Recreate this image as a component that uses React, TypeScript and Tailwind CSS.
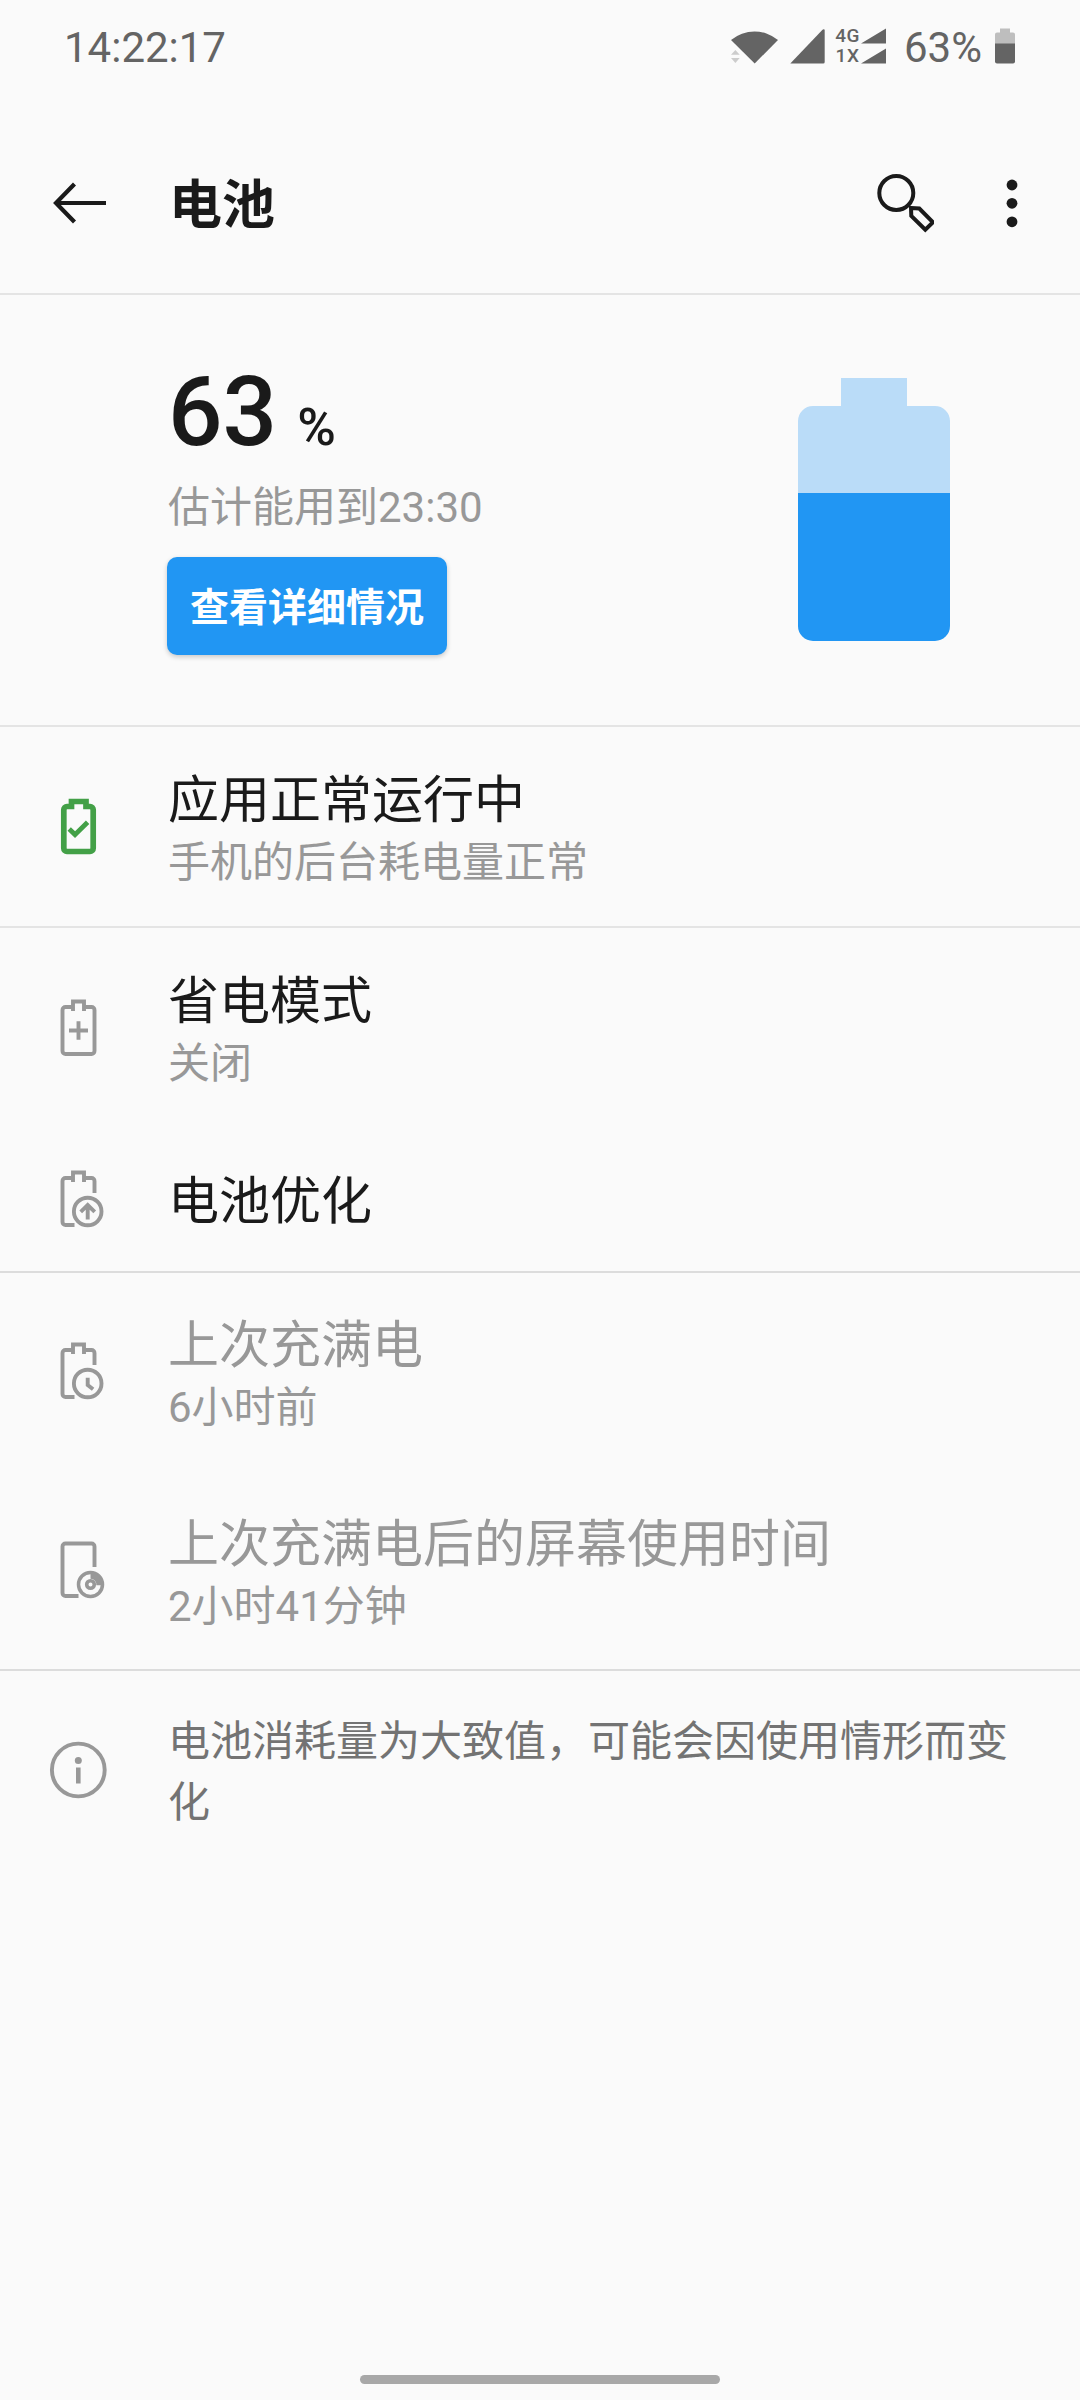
import type { ReactNode } from 'react';

const BATTERY_TOP = 'M27 15V5.5h11V15M16.5 14a3 3 0 0 1 3-3H27M38 11h7.5a3 3 0 0 1 3 3';

function RowIcon({ children, className = 'text-[#989898]' }: { children: ReactNode; className?: string }) {
  return (
    <svg viewBox="0 0 64 64" className={`size-16 shrink-0 ${className}`} fill="none" stroke="currentColor" strokeWidth="3.9">
      {children}
    </svg>
  );
}

function BatteryOkIcon() {
  return (
    <RowIcon className="text-[#43a047]">
      <path d="M25.5 6.5H40V11.5h4a3.2 3.2 0 0 1 3.2 3.2v38.6a3.2 3.2 0 0 1-3.2 3.2H21a3.2 3.2 0 0 1-3.2-3.2V14.7a3.2 3.2 0 0 1 3.2-3.2h4.5z" strokeWidth="5.7" />
      <path d="M23.2 34l5.8 5.6L41.6 27.2" strokeWidth="4.8" />
    </RowIcon>
  );
}

function BatterySaverIcon() {
  return (
    <RowIcon>
      <path d={BATTERY_TOP} />
      <path d="M16.5 14v41a3 3 0 0 0 3 3h26a3 3 0 0 0 3-3V14M23 34.5h19M32.5 25.3v18.5" />
    </RowIcon>
  );
}

function BatteryOptimizeIcon() {
  return (
    <RowIcon>
      <path d={BATTERY_TOP} />
      <path d="M16.5 14v41a3 3 0 0 0 3 3h9M48.5 14v12" />
      <circle cx="41.7" cy="44.5" r="13.8" />
      <path d="M41.7 52.5V38M34.7 44.8l7-6.8 7 6.8" />
    </RowIcon>
  );
}

function BatteryClockIcon() {
  return (
    <RowIcon>
      <path d={BATTERY_TOP} />
      <path d="M16.5 14v41a3 3 0 0 0 3 3h9M48.5 14v12" />
      <circle cx="41.7" cy="44.5" r="13.8" />
      <path d="M41.7 38.8v7.2l5.4 4.2" />
    </RowIcon>
  );
}

function ScreenTimeIcon() {
  return (
    <RowIcon>
      <path d="M48.5 29V8.5a3 3 0 0 0-3-3h-26a3 3 0 0 0-3 3V55a3 3 0 0 0 3 3h13" />
      <circle cx="44.5" cy="46.5" r="12" strokeWidth="3.5" />
      <circle cx="44.5" cy="46.5" r="3.8" strokeWidth="3.6" />
      <path d="M44.5 34.5a12 12 0 0 1 12 12.8h-6.2a5.8 5.8 0 0 0-5.8-6.6z" fill="currentColor" stroke="none" />
    </RowIcon>
  );
}

function InfoIcon() {
  return (
    <RowIcon>
      <circle cx="32.3" cy="32" r="26.4" />
      <circle cx="32.3" cy="22.5" r="3.5" fill="currentColor" stroke="none" />
      <path d="M32.3 29.5v16" strokeWidth="4.6" />
    </RowIcon>
  );
}

function StatusBar() {
  return (
    <div className="flex h-[91px] items-center pl-16 pr-[65px] text-[42px] text-[#646464]">
      <span className="flex-1 pt-1">14:22:17</span>
      <svg viewBox="0 0 94 36" className="h-9 w-[94px]" fill="currentColor">
        <path d="M0 12a37 37 0 0 1 47 0L23.7 35.5z" />
        <path d="M0 26.7l4.4-4.7 4.3 4.7zM0 30l4.4 5 4.3-5z" fill="#ccc" />
        <path d="M59.3 35.5L91.5 1.8c1-1 2.2-.6 2.2.8v31.4a1.5 1.5 0 0 1-1.5 1.5z" />
      </svg>
      <div className="ml-[9px] flex w-[27px] flex-col items-center text-[19px] font-medium leading-5 tracking-[0.5px]">
        <span>4G</span>
        <span>1X</span>
      </div>
      <svg viewBox="0 0 25 36" className="h-9 w-[25px]" fill="currentColor">
        <path d="M0 15.5L25 .5v15zM0 35.5l25-15v15z" />
      </svg>
      <span className="ml-[18px] pt-1">63%</span>
      <svg viewBox="0 0 20 36" className="ml-[13px] h-9 w-5" fill="currentColor">
        <path d="M5 .5h10v4h3a2 2 0 0 1 2 2V16H0V6.5a2 2 0 0 1 2-2h3z" fill="#bebebe" />
        <path d="M0 15.5h20v18a2 2 0 0 1-2 2H2a2 2 0 0 1-2-2z" />
      </svg>
    </div>
  );
}

function AppBar() {
  return (
    <header className="flex h-[204px] items-center border-b-2 border-[#e4e4e4] pl-[52px] pr-[60px] pt-[22px]">
      <svg viewBox="0 0 56 44" className="h-11 w-14" fill="none" stroke="currentColor" strokeWidth="4.2">
        <path d="M22.5 3L4 22l18.5 19M4 22h50" />
      </svg>
      <h1 className="ml-[61px] flex-1 pt-[7px] text-[53px] font-bold">电池</h1>
      <svg viewBox="0 0 60 60" className="size-[60px]" fill="none" stroke="currentColor" strokeWidth="4">
        <circle cx="22.3" cy="20" r="17" />
        <path d="M37 35l8.3.5L59 49.3l-7.7 7.4L37.3 43z" />
      </svg>
      <svg viewBox="0 0 16 60" className="ml-[70px] h-[60px] w-4" fill="currentColor">
        <circle cx="8" cy="12" r="5.4" />
        <circle cx="8" cy="30.3" r="5.4" />
        <circle cx="8" cy="48.8" r="5.4" />
      </svg>
    </header>
  );
}

function Summary() {
  return (
    <section className="flex h-[432px] justify-between border-b-2 border-[#e4e4e4] pl-[167px] pr-[130px]">
      <div className="flex flex-col items-start pt-[61px]">
        <div className="ml-px flex items-baseline gap-5 text-[96px] font-medium leading-[112px]">
          63<span className="text-[52.5px]">%</span>
        </div>
        <p className="-mt-[5px] ml-px text-[42px] leading-[60px] text-[#989898]">估计能用到23:30</p>
        <button className="mt-[19px] h-[98px] w-[280px] rounded-[10px] bg-[#2196f3] pt-1 text-[39px] font-bold text-white shadow-[0_2px_5px_rgba(0,0,0,0.2)]">
          查看详细情况
        </button>
      </div>
      <svg viewBox="0 0 152 263" className="mt-[83px] h-[263px] w-[152px]">
        <path d="M43 0h66v28h28a15 15 0 0 1 15 15v72H0V43a15 15 0 0 1 15-15h28z" fill="#badcf8" />
        <path d="M0 115h152v133a15 15 0 0 1-15 15H15a15 15 0 0 1-15-15z" fill="#2196f3" />
      </svg>
    </section>
  );
}

type RowProps = { icon: ReactNode; title: string; sub?: string; className: string };

function Row({ icon, title, sub, className }: RowProps) {
  return (
    <div className={`flex items-center pl-[46px] ${className}`}>
      {icon}
      <div className="ml-[58px]">
        <div className={`text-[51px] leading-[70px] ${sub ? 'pt-[2px]' : 'pt-[5px]'}`}>{title}</div>
        {sub && <div className="text-[42px] leading-[53px] text-[#989898]">{sub}</div>}
      </div>
    </div>
  );
}

export default function App() {
  return (
    <div className="flex h-[2400px] w-[1080px] flex-col bg-[#fafafa] font-[Roboto,'Noto_Sans_CJK_SC',sans-serif] text-[#1a1a1a]" lang="zh-CN">
      <StatusBar />
      <AppBar />
      <Summary />
      <div className="border-b-2 border-[#e4e4e4]">
        <Row icon={<BatteryOkIcon />} title="应用正常运行中" sub="手机的后台耗电量正常" className="h-[199px]" />
      </div>
      <div className="border-b-2 border-[#dcdcdc]">
        <Row icon={<BatterySaverIcon />} title="省电模式" sub="关闭" className="h-[199px]" />
        <Row icon={<BatteryOptimizeIcon />} title="电池优化" className="h-[144px]" />
      </div>
      <div className="border-b-2 border-[#dcdcdc]">
        <Row icon={<BatteryClockIcon />} title="上次充满电" sub="6小时前" className="h-[196px] text-[#989898]" />
        <Row icon={<ScreenTimeIcon />} title="上次充满电后的屏幕使用时间" sub="2小时41分钟" className="h-[200px] pt-[2px] text-[#989898]" />
      </div>
      <div className="flex h-[197px] items-center pl-[46px] pr-[60px]">
        <InfoIcon />
        <p className="ml-[58px] pt-1 text-[42px] leading-[61px] text-[#737373]">电池消耗量为大致值，可能会因使用情形而变化</p>
      </div>
      <div className="mx-auto mb-4 mt-auto h-[9px] w-[360px] rounded-full bg-[#a8a8a8]" />
    </div>
  );
}
